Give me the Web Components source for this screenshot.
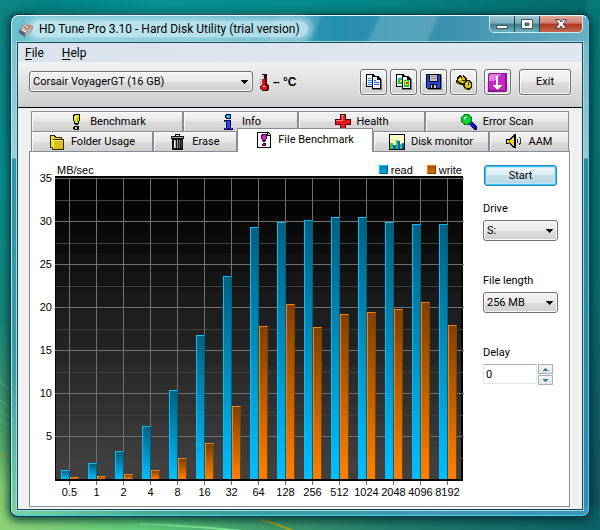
<!DOCTYPE html>
<html lang="en">
<head>
<meta charset="utf-8">
<title>HD Tune Pro</title>
<style>
  body { margin: 0; font: 11px/14px "Liberation Sans", Arial, sans-serif; color: #000; --ui: Roboto, "Liberation Sans", sans-serif; }
</style>
</head>
<body>
<desk-top>
  <app-window heading="HD Tune Pro 3.10 - Hard Disk Utility (trial version)">
    <menu-bar></menu-bar>
    <tool-bar></tool-bar>
    <tab-book>
      <bench-chart></bench-chart>
      <bench-controls></bench-controls>
    </tab-book>
  </app-window>
</desk-top>
<script>
const define = (name, html, setup) => customElements.define(name, class extends HTMLElement {
  constructor() {
    super();
    const t = document.createElement('template');
    t.innerHTML = '<style>:host,*{box-sizing:border-box}button,input,select{font:inherit;color:inherit;margin:0}</style>' + html;
    this.attachShadow({ mode: 'open' }).append(t.content.cloneNode(true));
  }
  connectedCallback() { if (setup) setup(this, this.shadowRoot); }
});

const icons = {
  disk: [16, 16, '<path d="M1 9 7 2l8 3-1 6-7 5z" fill="#8b8f94"/><path d="M3 8 8 2l6 3-4 6z" fill="#c9bcb8"/><path d="m6 7 3-4 4 2-3 4z" fill="#c0786c"/><path d="m1 9 6 3v4l-6-4z" fill="#54616c"/><path d="m7 12 7-5v4l-7 5z" fill="#a9afb3"/><circle cx="9" cy="6" r="1.5" fill="#eee0d8"/><path d="m4 9 4 2" stroke="#e6eef0"/>'],
  bench: [16, 16, '<path d="M6 0h5l1 1v4l-1 4-1 2H7L6 9 5 5V1z" fill="#000"/><path d="M7 1h3l1 1v3l-1 4H7L6 5V2z" fill="#f0e800"/><path d="M7 2h1v3H7z" fill="#fff"/><path d="M9 4h1v4H9z" fill="#a09800"/><path d="M6 12h4l1 1v2l-1 1H7l-2-1v-2z" fill="#000"/><path d="M7 13h2v2H7z" fill="#f0e800"/>'],
  info: [16, 16, '<path d="M6 0h4l1 1v3l-1 1H6L5 4V1zM4 6h7v8h2v2H4v-2h2V8H4z" fill="#000040"/><path d="M7 1h2l1 1v1L9 4H7L6 3V2z" fill="#00c8f8"/><path d="M5 7h5v8H7V8H5zM5 15h7v-1H5z" fill="#1850ff"/>'],
  health: [16, 16, '<path d="M5 0h6v5h5v6h-5v5H5v-5H0V5h5z" fill="#500000"/><path d="M6 1h4v5h5v4h-5v5H6v-5H1V6h5z" fill="#e81818"/><path d="M6 1h1v5H1v1M7 1h2" stroke="#ff8080" fill="none"/>'],
  scan: [16, 16, '<path d="m8 8 2-1 6 6v2l-1 1h-2L8 10z" fill="#000060"/><path d="m9 9 5 5" stroke="#1818e8" stroke-width="2"/><circle cx="5.500" cy="5.500" r="5" fill="#00d830" stroke="#088020"/><path d="M3 3h3v1H4v2H3z" fill="#d8ffd8"/>'],
  folder: [16, 16, '<path d="M1 1h5l1 2h6v2h2v11H3v-2H1z" fill="#302800"/><path d="M2 2h3l1 2h6v1H4v8H2z" fill="#f0e020"/><path d="M4 6h10v9H4z" fill="#d8c018"/><path d="M4 6h10v1H5v8H4z" fill="#fff060"/>'],
  erase: [16, 16, '<path d="M1 2h4V0h5v2h4v3h-1v11H2V5H1z" fill="#101010"/><path d="M2 3h11v1H2z" fill="#a8a8a8"/><path d="M6 1h3v1H6z" fill="#eee"/><path d="M4 6h1v8H4z" fill="#fff"/><path d="M5 6h1v8H5zM7 6h1v8H7z" fill="#aaa"/><path d="M9 6h1v8H9z" fill="#777"/><path d="M11 6h1v8h-1z" fill="#444"/>'],
  file: [16, 16, '<path d="M1 0h11l3 3v13H1z" fill="#000"/><path d="M2 1h9v3h3v11H2z" fill="#fff"/><path d="M12 1v2h2z" fill="#ccc"/><path d="M6 2h4l1 1v3l-2 4H7L5 6V3z" fill="#400040"/><path d="M7 3h2l1 1v2L8 9 6 6V4z" fill="#d020c8"/><path d="M7 11h3v3H6v-2z" fill="#400040"/><path d="M7 12h2v1H7z" fill="#d020c8"/>'],
  monitor: [16, 16, '<path d="M0 0h16v16H0z" fill="#000"/><path d="M1 1h14v14H1z" fill="#fffcc8"/><path d="M1 9h3v6H1zM7 6h2v9H7zM11 10h2v5h-2z" fill="#20d820"/><path d="M4 11h3v4H4zM9 7h2v8H9zM13 9h2v6h-2z" fill="#2848ff"/>'],
  aam: [17, 16, '<path d="M0 5h3l5-5h2v14H8l-5-4H0z" fill="#000"/><path d="M1 6h2v3H1zM4 6l4-4v10L4 9z" fill="#e8d818"/><path d="M3 6h1v4H3z" fill="#807800"/><path d="M5 6l2-2v2z" fill="#fff8a0"/><path d="M11 5q2 2 0 4M13 3q4 4 0 8" stroke="#333" fill="none"/>'],
  copy: [16, 16, '<path d="M0 0h7l3 3v10H0z" fill="#000"/><path d="M1 1h5v3h3v8H1z" fill="#f4f4f4"/><path d="M2 4h3v1H2zM2 6h5v1H2zM2 8h5v1H2zM2 10h4v1H2z" fill="#20a0e8"/><path d="M7 3h6l3 3v9l-1 1H6V3z" fill="#777"/><path d="M6 2h6l3 3v10H6z" fill="#000"/><path d="M7 3h4v3h3v8H7z" fill="#f4f4f4"/><path d="M8 6h2v1H8zM8 8h5v1H8zM8 10h5v1H8z" fill="#3058f0"/>'],
  shot: [16, 16, '<path d="M0 0h7l3 3v10H0z" fill="#000"/><path d="M1 1h5v3h3v8H1z" fill="#f4f4f4"/><path d="M2 4h5v6H2z" fill="#20c830"/><path d="M2 4h2v2H2z" fill="#20a0ff"/><path d="M4 6h2v2H4z" fill="#f0e020"/><path d="M7 3h6l3 3v9l-1 1H6V3z" fill="#777"/><path d="M6 2h6l3 3v10H6z" fill="#000"/><path d="M7 3h4v3h3v8H7z" fill="#f4f4f4"/><path d="M8 6h5v7H8z" fill="#20c830"/><path d="M9 7h3v4H9z" fill="#f0e020"/><path d="M10 8h2v2h-2z" fill="#f02020"/>'],
  save: [16, 16, '<path d="M1 1h14l1 1v14H2l-1-1z" fill="#777"/><path d="M0 0h15v15H1l-1-1z" fill="#000"/><path d="M1 1h2v7h9V1h2v13h-3v-4H4v4H1z" fill="#2048e8"/><path d="M4 1h7v6H4z" fill="#c8c8c8"/><path d="M5 2h5v1H5zM5 4h5v1H5z" fill="#888"/><path d="M5 11h5v3H5z" fill="#ccc"/><path d="M6 11h2v3H6z" fill="#222"/>'],
  gears: [16, 16, '<path d="m4 1 2 1 2-1 1 2 2 1v2h3l2 3v4l-2 3h-4l-2-1-1-4H4L1 10 0 7l1-2 1-3z" fill="#202000"/><path d="m4 3 3-1 2 3v3L6 9 4 8 2 7l1-3z" fill="#d8c010"/><path d="m9 9 3-2 3 2v3l-2 2h-3l-1-2z" fill="#d8c010"/><path d="M3 4h2v2H3zM10 9h2v1h-2z" fill="#fff480"/><path d="M5 2h1v3H5zM6 6h3v1H6zM12 8h1v3h-1z" fill="#302800"/><path d="M1 8l3 3M8 14l3 2" stroke="#a09000"/>'],
  down: [19, 19, '<rect width="19" height="19" rx="2" fill="#8c1090"/><path d="M1 1h16v16H1z" fill="#c428c4"/><path d="M2 1h11L6 8H1V2z" fill="#dc80dc"/><path d="M8 3h2v9h4l-5 5-5-5h4z" fill="#fff"/><path d="M7 9h1v3H7zM10 9h1v3h-1z" fill="#c428c4"/>'],
  thermo: [10, 17, '<path d="M3 0h4l1 1v9l2 2v3l-2 2H3l-2-2v-3l2-2z" fill="#400"/><path d="M3 1h2v10H3z" fill="#a8d8f0"/><path d="M3 5h3v6l2 1v3l-2 1H4l-2-1v-3l1-1z" fill="#e81018"/><path d="M4 12h2v1H4z" fill="#fff"/><path d="M1 5h1M1 7h1M1 9h1" stroke="#888"/>'],
  arrow: [7, 4, '<path d="M0 0h7L4 4H3z"/>'],
  up: [5, 3, '<path d="M0 3 2 0h1l2 3z" fill="#3a78a8"/>'],
  dn: [5, 3, '<path d="M0 0 2 3h1l2-3z" fill="#3a78a8"/>']
};
define('pixel-icon', '<style>:host{display:inline-flex;flex:none}svg{display:block}</style><svg shape-rendering="crispEdges" aria-hidden="true"></svg>', (el, root) => {
  const icon = icons[el.getAttribute('name')];
  if (!icon) return;
  const [w, h, body] = icon;
  const svg = root.querySelector('svg');
  svg.setAttribute('width', w); svg.setAttribute('height', h);
  svg.setAttribute('viewBox', `0 0 ${w} ${h}`);
  svg.innerHTML = body;
});

define('drop-down', `<style>
  :host{display:grid;height:21px;font-family:var(--ui)}
  select,pixel-icon{grid-area:1/1}
  select{appearance:none;width:100%;height:100%;padding:0 18px 0 3px;border:1px solid #707070;border-radius:3px;
    background:linear-gradient(#f2f2f2,#ebebeb 50%,#ddd 50%,#cfcfcf);box-shadow:inset 0 0 0 1px #fbfbfb}
  pixel-icon{justify-self:end;align-self:center;margin-right:5px;pointer-events:none}
</style><select><option></option></select><pixel-icon name="arrow"></pixel-icon>`, (el, root) => {
  root.querySelector('option').textContent = el.getAttribute('value');
  root.querySelector('select').setAttribute('aria-label', el.getAttribute('label'));
});

define('push-button', `<style>
  :host{display:flex;font-family:var(--ui)}
  button{flex:1;display:flex;align-items:center;justify-content:center;padding:0;border:1px solid #707070;border-radius:3px;
    background:linear-gradient(#f4f4f4,#ebebeb 50%,#dedede 50%,#d0d0d0);box-shadow:inset 0 0 0 1px #fafafa,0 0 0 1px #eaeaea}
  :host([primary]) button{border-color:#2c7fae;background:linear-gradient(#eef7fb,#dcedf5 50%,#c6e0ea 50%,#b6d4e0);box-shadow:inset 0 0 0 1px #3cc8f8,inset 0 0 0 2px #b4e8fa}
</style><button type="button"><slot></slot></button>`, (el, root) => {
  if (el.hasAttribute('label')) root.querySelector('button').setAttribute('aria-label', el.getAttribute('label'));
});

define('desk-top', `<style>
  :host{display:grid;min-height:100vh;overflow:hidden;
    background:
      linear-gradient(90deg,#8cd276,#62d07c 24%,#409a6c 45%,#237c6c 65%,#0b6268) 0 100%/100% 24px no-repeat,
      linear-gradient(#0c8482,#078e90 34%,#16897b 60%,#3c946e 74%,#55ab66 84%,#88d070 92%) 0 0/14px 100% no-repeat,
      linear-gradient(#067a78,#066f70 50%,#17505c) 100% 0/14px 100% no-repeat,
      linear-gradient(90deg,#108684,#028182 8%,#069292 26%,#058686 60%,#04696a)}
  svg,slot{grid-area:1/1}
  svg{width:100%;height:100%}
  slot{display:grid;padding:15px 11px 14px;z-index:1;position:relative}
</style>
<svg viewBox="0 0 600 530" preserveAspectRatio="none" fill="none" aria-hidden="true">
  <path d="M140 524q60 2 110 8" stroke="#7ce890" stroke-width="2"/><path d="M262 520q18 5 34 12" stroke="#a8a818" stroke-width="2"/>
  <path d="M0 400l10 8M0 410l10 8M0 420l10 8M0 382l10 8" stroke="#66b88c"/><path d="M0 452l6 6" stroke="#b89030"/>
</svg><slot></slot>`);

define('app-window', `<style>
  :host{display:flex;flex-direction:column;min-width:0;padding:0 5px 5px;border:1px solid #48d0ec;border-top-color:#e6fcff;border-left-color:#b4eef4;border-radius:7px;
    background:
      linear-gradient(115deg,#0000 45%,#ffffff22 46% 52%,#0000 53% 62%,#ffffff2a 63% 72%,#0000 73%) 0 0/100% 27px no-repeat,
      linear-gradient(90deg,#6dc0cf,#5ab8cb 30%,#2390ae 56%,#3a90ad 75%,#6ab0c4) 0 0/100% 27px no-repeat,
      linear-gradient(90deg,#7ad4a0,#4cb094 22%,#3aa0a0 40%,#4498b4 75%,#3d94ba) 0 100%/100% 8px no-repeat,
      linear-gradient(#7cc0d0,#98d0dc 142px,#2f93ad 143px,#3a9ca4 70%,#7ad4a0) 0 0/8px 100% no-repeat,
      linear-gradient(#74b4c6,#98c8d8 142px,#2f86a4 143px,#2f8cb2) 100% 0/8px 100% no-repeat #3a90aa;
    box-shadow:0 0 0 1px #083c46,0 2px 9px 3px #002c30d0}
  header{display:flex;align-items:flex-start;height:26px;padding-left:1px}
  .name{display:flex;align-items:center;gap:5px;align-self:stretch;font:12px/16px var(--ui)}
  h1{font:inherit;margin:0;padding:0 8px;margin-left:-8px;border-radius:9px;background:#e2f5fab0;box-shadow:0 0 7px 4px #e2f5fa90;white-space:nowrap}
  .name pixel-icon{z-index:1}
  nav{display:flex;margin-left:auto;border:1px solid #d0ecf2;border-top:0;border-radius:0 0 5px 5px;overflow:hidden;height:17px}
  button{display:grid;place-items:center;padding:0 0 1px;width:25px;border:0;border-right:1px solid #1d4956;background:linear-gradient(#9fc6d2,#78aebd 45%,#3f7c90 50%,#72b0be)}
  button:last-child{width:42px;border-right:0;background:linear-gradient(#e0a898,#d07e70 45%,#ae3420 50%,#c66a50)}
  main{flex:1;display:flex;flex-direction:column;min-width:0;border:1px solid #154753;outline:1px solid #a4dbe4;background:#f0f0f0}
</style>
<header><div class="name"><pixel-icon name="disk"></pixel-icon><h1></h1></div>
<nav aria-label="Window">
<button type="button" aria-label="Minimize"><svg width="12" height="12" viewBox="0 0 12 12"><path d="M.5 7.500h11v3H.5z" fill="#fff" stroke="#44545c"/></svg></button>
<button type="button" aria-label="Maximize"><svg width="12" height="12" viewBox="0 0 12 12"><path fill-rule="evenodd" d="M.5 1.500h11v9H.5zM4 5v2.500h4V5z" fill="#fff" stroke="#44545c"/></svg></button>
<button type="button" aria-label="Close"><svg width="12" height="12" viewBox="0 0 12 12"><path d="M.5 1.500H4L6 4l2-2.500h3.500L8 6l3.500 4.500H8L6 8l-2 2.500H.5L4 6z" fill="#fff" stroke="#54444c"/></svg></button>
</nav></header>
<main><slot></slot></main>`, (el, root) => { root.querySelector('h1').textContent = el.getAttribute('heading'); });

define('menu-bar', `<style>
  :host{display:flex;height:19px;align-items:center;background:linear-gradient(90deg,#dae4ec,#dfe6ef);font:12px/16px var(--ui)}
  button{border:0;background:none;padding:0;margin-left:7px;margin-right:11px}
  u{text-underline-offset:2px}
</style><button type="button"><u>F</u>ile</button><button type="button"><u>H</u>elp</button>`);

define('tool-bar', `<style>
  :host{display:flex;height:46px;padding:7px 11px 0;border-bottom:1px solid #000;background:linear-gradient(#f2f2f2,#cdcdcd)}
  drop-down{flex:0 1 224px;margin-top:2px}
  .temp{display:flex;align-items:center;gap:4px;height:26px;margin:0 auto 0 6px;font-size:12px;font-weight:bold;white-space:nowrap}
  push-button{width:27px;height:26px;margin-left:3px}
  .down{margin-left:7px}
  .exit{width:52px;margin-left:8px}
</style>
<drop-down value="Corsair VoyagerGT (16 GB)" label="Drive"></drop-down>
<span class="temp"><pixel-icon name="thermo"></pixel-icon><span>– °C</span></span>
<push-button label="Copy text"><pixel-icon name="copy"></pixel-icon></push-button>
<push-button label="Copy screenshot"><pixel-icon name="shot"></pixel-icon></push-button>
<push-button label="Save"><pixel-icon name="save"></pixel-icon></push-button>
<push-button label="Options"><pixel-icon name="gears"></pixel-icon></push-button>
<push-button class="down" label="Minimize to tray"><pixel-icon name="down"></pixel-icon></push-button>
<push-button class="exit">Exit</push-button>`);

define('tab-item', `<style>
  :host{display:flex;min-width:0;font-family:var(--ui)}
  button{flex:1;display:flex;align-items:center;justify-content:center;gap:6px;min-width:0;padding:0;white-space:nowrap;
    border:1px solid #898c95;border-bottom:0;background:linear-gradient(#f4f4f4,#e8e8e8 50%,#dcdcdc 50%,#d0d0d0);box-shadow:inset 1px 1px #fcfcfc}
  :host([selected]){margin:-3px 0 -1px;z-index:1}
  :host([selected]) button{background:#fff;padding-bottom:2px}
</style><button type="button" role="tab"><pixel-icon></pixel-icon><slot></slot></button>`, (el, root) => {
  const icon = document.createElement('pixel-icon');
  icon.setAttribute('name', el.getAttribute('icon'));
  root.querySelector('pixel-icon').replaceWith(icon);
  root.querySelector('button').setAttribute('aria-selected', el.hasAttribute('selected'));
});

define('tab-book', `<style>
  :host{display:flex;flex-direction:column;flex:1;padding:3px 12px 2px 11px}
  .row{display:grid;padding:0 1px 0 2px}
  .a{grid-template-columns:152fr 115fr 127fr 144fr;height:20px}
  .b{grid-template-columns:122fr 84fr 136fr 116fr 80fr;height:20px}
  section{flex:1;display:flex;gap:20px;border:1px solid #898c95;background:#fff;padding-right:11px;box-shadow:2px 1px #fafafa}
</style>
<div class="row a" role="tablist"><tab-item icon="bench">Benchmark</tab-item><tab-item icon="info">Info</tab-item><tab-item icon="health">Health</tab-item><tab-item icon="scan">Error Scan</tab-item></div>
<div class="row b" role="tablist"><tab-item icon="folder">Folder Usage</tab-item><tab-item icon="erase">Erase</tab-item><tab-item icon="file" selected>File Benchmark</tab-item><tab-item icon="monitor">Disk monitor</tab-item><tab-item icon="aam">AAM</tab-item></div>
<section role="tabpanel"><slot></slot></section>`);

const results = [
  ['0.5', 1, .2], ['1', 1.9, .3], ['2', 3.3, .6], ['4', 6.2, 1.1], ['8', 10.4, 2.4],
  ['16', 16.8, 4.2], ['32', 23.6, 8.5], ['64', 29.3, 17.8], ['128', 29.9, 20.3], ['256', 30.1, 17.7],
  ['512', 30.5, 19.2], ['1024', 30.5, 19.4], ['2048', 29.9, 19.8], ['4096', 29.7, 20.6], ['8192', 29.6, 17.9]
];
define('bench-chart', `<style>
  :host{flex:1;min-width:0;display:grid;grid-template:24px minmax(200px,1fr) 25px/25px 1fr}
  .head{grid-area:1/2;display:flex;gap:14px;padding:11px 1px 0 2px;line-height:12px}
  .head span{display:flex;align-items:center;gap:3px}
  .head span:first-child{margin-right:auto}
  i{width:9px;height:9px;border:1px solid #00bfff;background:linear-gradient(#0088b8,#00a8e0);border-right-color:#006080;border-bottom-color:#006080}
  i.w{border-color:#ff8000 #804000 #804000 #ff8000;background:linear-gradient(#a05000,#e07000)}
  .y{grid-area:2/1;display:grid;grid-auto-rows:1fr;padding:2px 3px 2px 0;text-align:right;line-height:1px}
  .plot{grid-area:2/2;display:grid;border:solid #000;border-width:2px 2px 2px 1px;min-width:0}
  .rows,.cols{grid-area:1/1;display:grid;min-width:0}
  .rows{grid-auto-rows:1fr;margin:0 -3px 0 -1px}
  .rows b{border-top:1px solid #707070}
  .rows b:nth-child(even){border-color:#404040;margin:0 1px}
  .cols,.x{grid-template-columns:repeat(15,1fr)}
  .col{display:grid;grid-template-columns:1fr 1fr;align-items:end;min-width:0;background:linear-gradient(#707070,#707070) 50% 0/1px 100% no-repeat}
  .col div{width:9px;min-height:2px;border:1px solid #00bfff;border-right-color:#006080;border-bottom:0;background:linear-gradient(#006080,#00bfff);justify-self:end}
  .col div.w{border-color:#ff8000;border-right-color:#804000;background:linear-gradient(#804000,#ff8000);justify-self:start}
  .x{grid-area:3/2;display:grid;padding:0 2px 0 1px;text-align:center}
  .x span{min-width:0;padding-top:4px;background:linear-gradient(#707070,#707070) 50% 0/1px 4px no-repeat}
</style>
<div class="head"><span>MB/sec</span><span><i></i>read</span><span><i class="w"></i>write</span></div>
<div class="y"></div>
<div class="plot"><div class="rows"></div><div class="cols"></div></div>
<div class="x"></div>`, (el, root) => {
  const $ = s => root.querySelector(s);
  $('.y').innerHTML = [35, 30, 25, 20, 15, 10, 5].map(v => `<span>${v}</span>`).join('');
  $('.rows').innerHTML = '<b></b>'.repeat(14);
  $('.cols').innerHTML = results.map(([, r, w]) => `<div class="col"><div style="height:${r / .35}%"></div><div class="w" style="height:${w / .35}%"></div></div>`).join('');
  $('.x').innerHTML = results.map(([n]) => `<span>${n}</span>`).join('');
  const n = 16;
  const stops = Array.from({ length: n }, (_, i) => {
    const c = Math.round(i * 64 / (n - 1));
    return `rgb(${c},${c},${c}) ${i * 100 / n}% ${(i + 1) * 100 / n}%`;
  });
  $('.plot').style.background = `linear-gradient(${stops.join(',')})`;
});

define('bench-controls', `<style>
  :host{display:flex;flex-direction:column;flex:0 0 75px;padding-top:13px;font-family:var(--ui)}
  push-button{height:21px;margin:0 1px 15px}
  label,.label{line-height:15px;margin-bottom:4px}
  drop-down{margin-bottom:32px}
  .spin{display:flex;gap:1px}
  input{appearance:textfield;width:54px;height:20px;padding:0 0 0 2px;border:1px solid #dfe5ee;border-top-color:#abadb3;border-radius:1px;background:#fff}
  input::-webkit-inner-spin-button{appearance:none}
  .steps{display:grid;gap:1px;width:15px}
  .steps button{display:grid;place-items:center;padding:0;border:1px solid #a8b0b8;background:linear-gradient(#f6f6f6,#e0e4e8);height:10px}
</style>
<push-button primary>Start</push-button>
<span class="label">Drive</span><drop-down value="S:" label="Drive"></drop-down>
<span class="label">File length</span><drop-down value="256 MB" label="File length"></drop-down>
<label for="delay">Delay</label>
<div class="spin"><input id="delay" type="number" value="0"><span class="steps"><button type="button" aria-label="Increase"><pixel-icon name="up"></pixel-icon></button><button type="button" aria-label="Decrease"><pixel-icon name="dn"></pixel-icon></button></span></div>`);
</script>
</body>
</html>
